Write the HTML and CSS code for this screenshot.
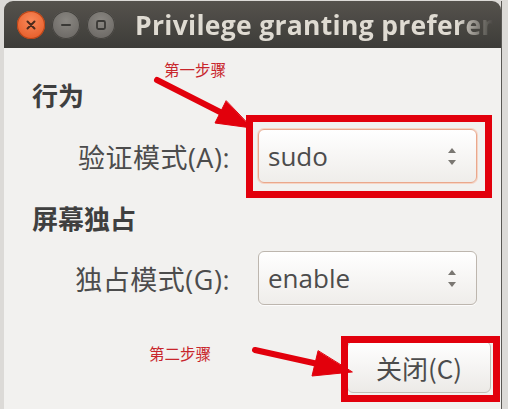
FILE: index.html
```html
<!DOCTYPE html>
<html lang="zh-CN">
<head>
    <meta charset="UTF-8">
    <title>Privilege granting preferences</title>
    <link rel="stylesheet" href="styles.css">
</head>
<body>
    <div class="window">
        <div class="titlebar">
            <div class="wm-buttons">
                <span class="wm-btn wm-close">
                    <svg width="12" height="12" viewBox="0 0 12 12"><path d="M2.5 2.5 L9.5 9.5 M9.5 2.5 L2.5 9.5" stroke="#4b2a1c" stroke-width="2" stroke-linecap="round"/></svg>
                </span>
                <span class="wm-btn">
                    <svg width="12" height="12" viewBox="0 0 12 12"><path d="M2 6 H10" stroke="#3a3936" stroke-width="2" stroke-linecap="round"/></svg>
                </span>
                <span class="wm-btn">
                    <svg width="12" height="12" viewBox="0 0 12 12"><rect x="2" y="2" width="8" height="8" rx="1.5" fill="none" stroke="#3a3936" stroke-width="1.8"/></svg>
                </span>
            </div>
            <div class="title">Privilege granting preferences</div>
        </div>

        <div class="content">
            <h2 class="section">行为</h2>
            <div class="row">
                <label class="label">验证模式(A):</label>
                <div class="combo focused">
                    <span>sudo</span>
                    <span class="spin"><i class="up"></i><i class="down"></i></span>
                </div>
            </div>

            <h2 class="section second">屏幕独占</h2>
            <div class="row">
                <label class="label">独占模式(G):</label>
                <div class="combo">
                    <span>enable</span>
                    <span class="spin"><i class="up"></i><i class="down"></i></span>
                </div>
            </div>

            <div class="actions">
                <button class="btn">关闭(C)</button>
            </div>
        </div>
    </div>

    <!-- step annotations drawn over the dialog -->
    <span class="note note-1">第一步骤</span>
    <span class="note note-2">第二步骤</span>
    <svg class="marks" width="508" height="409" viewBox="0 0 508 409">
        <g fill="none" stroke="#e2000c" stroke-width="7">
            <rect x="249.5" y="118.5" width="239" height="76"/>
            <rect x="344.5" y="339.5" width="152" height="59"/>
        </g>
        <g fill="#e2000c" stroke="#e2000c" stroke-linecap="round">
            <line x1="157" y1="80" x2="222" y2="113" stroke-width="6"/>
            <polygon points="252,128 215,123 226,101" stroke-width="1"/>
            <line x1="255" y1="350" x2="318" y2="364" stroke-width="6"/>
            <polygon points="352,372 312,376 318,351" stroke-width="1"/>
        </g>
    </svg>
</body>
</html>
```

FILE: styles.css
```css
* {
    box-sizing: border-box;
    margin: 0;
    padding: 0;
}

body {
    width: 508px;
    height: 409px;
    overflow: hidden;
    background: #dcdad7;
    font-family: "Open Sans", "Noto Sans CJK SC", sans-serif;
    position: relative;
}

.window {
    margin: 1px 6px 0 4px;
    height: 408px;
    display: flex;
    flex-direction: column;
    border-right: 1px solid #5a5854;
}

/* title bar */
.titlebar {
    height: 47px;
    background: linear-gradient(#55524d, #3d3c38);
    border-radius: 9px 9px 0 0;
    display: flex;
    align-items: center;
    padding-left: 13px;
    color: #dfdbd2;
}

.wm-buttons {
    display: flex;
    gap: 7px;
}

.wm-btn {
    width: 28px;
    height: 28px;
    border-radius: 50%;
    background: radial-gradient(circle at 50% 35%, #8a8782, #65625e);
    box-shadow: inset 0 0 0 1px #44423e;
    display: flex;
    align-items: center;
    justify-content: center;
}

.wm-close {
    background: radial-gradient(circle at 50% 35%, #f9895a, #e2541f);
    box-shadow: inset 0 0 0 1px #b84417;
}

/* long titles get clipped and faded at the window edge */
.title {
    margin-left: 20px;
    font-weight: 700;
    font-size: 26.5px;
    letter-spacing: 0.3px;
    white-space: nowrap;
    overflow: hidden;
    width: 358px;
    -webkit-mask-image: linear-gradient(to right, #000 90%, transparent 100%);
    mask-image: linear-gradient(to right, #000 90%, transparent 100%);
}

/* dialog body */
.content {
    flex: 1;
    background: #f2f1ef;
    padding: 31px 10px 0 28px;
    color: #4a4a4a;
}

.section {
    font-size: 26px;
    line-height: 34px;
    font-weight: 700;
    color: #3f3f3f;
}

.section.second {
    margin-top: 19px;
}

.row {
    display: grid;
    grid-template-columns: 198px 219px;
    column-gap: 28px;
    align-items: center;
    margin-top: 16px;
}

.section.second + .row {
    margin-top: 15px;
}

.label {
    text-align: right;
    font-size: 27px;
    letter-spacing: 0.5px;
    color: #4c4c4c;
}

.combo {
    height: 54px;
    border: 1px solid #bdb6ae;
    border-radius: 6px;
    background: linear-gradient(#ffffff, #efedea);
    display: flex;
    align-items: center;
    justify-content: space-between;
    padding: 0 20px 0 9px;
    font-size: 26px;
    color: #4c4c4c;
    box-shadow: 0 1px 0 rgba(255, 255, 255, 0.8);
}

.combo.focused {
    border-color: #eaa88c;
    box-shadow: 0 0 0 1px #f6d4c4;
}

.spin {
    display: flex;
    flex-direction: column;
    gap: 7px;
}

.spin i {
    width: 0;
    height: 0;
    border-left: 4px solid transparent;
    border-right: 4px solid transparent;
}

.spin .up {
    border-bottom: 5px solid #7a7772;
}

.spin .down {
    border-top: 5px solid #7a7772;
}

.actions {
    display: flex;
    justify-content: flex-end;
    margin-top: 36px;
}

.btn {
    width: 144px;
    height: 52px;
    border: 1px solid #c3bdb6;
    border-radius: 6px;
    background: linear-gradient(#ffffff, #eceae7);
    font-family: "Noto Sans CJK SC", sans-serif;
    font-size: 26px;
    color: #4c4c4c;
}

/* annotations */
.note {
    position: absolute;
    font-family: "Noto Sans CJK SC", sans-serif;
    font-size: 15.5px;
    line-height: 18px;
    color: #c8262c;
}

.note-1 {
    left: 164px;
    top: 60px;
}

.note-2 {
    left: 149px;
    top: 344px;
}

.marks {
    position: absolute;
    left: 0;
    top: 0;
}
```
